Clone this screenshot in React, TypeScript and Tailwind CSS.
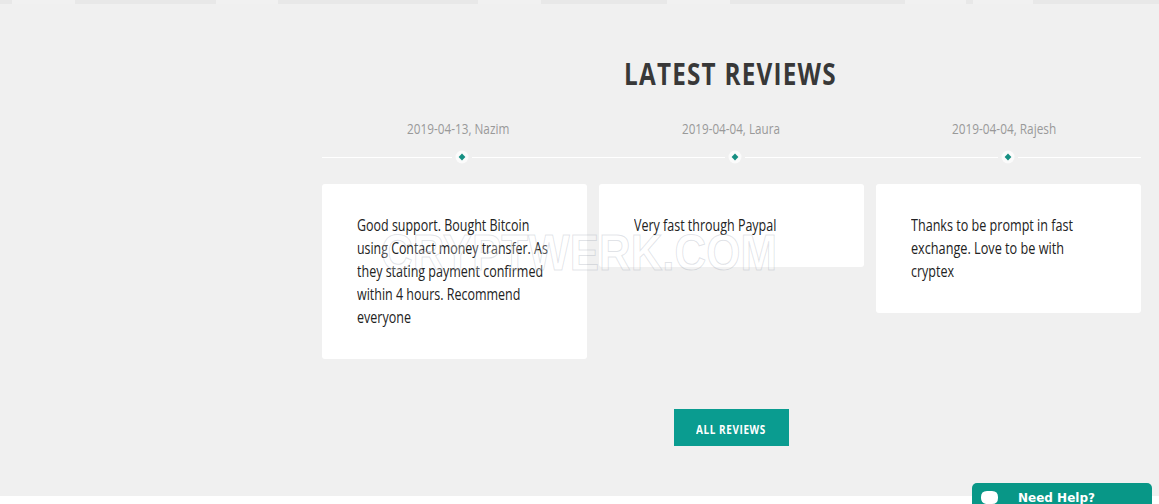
import { useLayoutEffect, useRef, useState } from "react";

const reviews = [
  {
    meta: "2019-04-13, Nazim",
    metaWidth: 102,
    lines: [
      { text: "Good support. Bought Bitcoin", width: 172 },
      { text: "using Contact money transfer. As", width: 191 },
      { text: "they stating payment confirmed", width: 186 },
      { text: "within 4 hours. Recommend", width: 163 },
      { text: "everyone", width: 54 }
    ]
  },
  {
    meta: "2019-04-04, Laura",
    metaWidth: 98,
    lines: [{ text: "Very fast through Paypal", width: 142 }]
  },
  {
    meta: "2019-04-04, Rajesh",
    metaWidth: 104,
    lines: [
      { text: "Thanks to be prompt in fast", width: 162 },
      { text: "exchange. Love to be with", width: 153 },
      { text: "cryptex", width: 43 }
    ]
  }
];

// Condenses a line of text horizontally to the given width
function NarrowText({ text, width }: { text: string; width: number }) {
  const ref = useRef<HTMLSpanElement>(null);
  const [scale, setScale] = useState(1);

  useLayoutEffect(() => {
    if (ref.current) {
      setScale(width / ref.current.offsetWidth);
    }
  }, [text, width]);

  return (
    <span className="block whitespace-nowrap" style={{ width }}>
      <span ref={ref} className="inline-block origin-left" style={{ transform: `scaleX(${scale})` }}>
        {text}
      </span>
    </span>
  );
}

function TopStrip() {
  return (
    <div className="flex h-1 bg-[#e8e8e8]">
      <div className="ml-3 w-[63px] bg-[#f1f1f1]" />
      <div className="ml-[141px] w-[62px] bg-[#f1f1f1]" />
      <div className="ml-[200px] w-[63px] bg-[#f1f1f1]" />
      <div className="ml-[126px] w-[63px] bg-[#f1f1f1]" />
      <div className="ml-[175px] w-[61px] bg-[#f1f1f1]" />
      <div className="ml-[7px] w-[60px] bg-[#f1f1f1]" />
    </div>
  );
}

function Timeline() {
  return (
    <div className="mt-[9px] grid h-5 grid-cols-3">
      {reviews.map((review) => (
        <div key={review.meta} className="flex items-center">
          <div className="h-px w-[130px] bg-white" />
          <svg className="h-5 w-5" viewBox="0 0 20 20">
            <circle cx="10" cy="10" r="6.5" fill="#fbfbfb" />
            <path d="M10 6.6 13.4 10 10 13.4 6.6 10Z" fill="#168f82" />
          </svg>
          <div className="h-px flex-1 bg-white" />
        </div>
      ))}
    </div>
  );
}

export default function App() {
  return (
    <div className="relative h-[504px] w-[1159px] overflow-hidden bg-white font-['Open_Sans',sans-serif]">
      <section className="h-[496px] bg-[#f0f0f0]">
        <TopStrip />
        <div className="ml-[322px] w-[819px]">
          <h2 className="flex justify-center pt-[50px] pr-[2px] text-[30px] leading-[40px] font-bold tracking-[1.5px] text-[#383838]">
            <NarrowText text="LATEST REVIEWS" width={213} />
          </h2>
          <div className="mt-6 grid grid-cols-3 text-[15px] leading-5 text-[#999]">
            {reviews.map((review) => (
              <div key={review.meta} className="flex justify-center pr-px">
                <NarrowText text={review.meta} width={review.metaWidth} />
              </div>
            ))}
          </div>
          <Timeline />
          <div className="mt-[17px] grid h-[175px] grid-cols-3 items-start gap-3">
            {reviews.map((review) => (
              <div
                key={review.meta}
                className="rounded-[3px] bg-white py-[30px] pl-[34.5px] text-[16px] leading-[23px] text-[#222]"
              >
                {review.lines.map((line) => (
                  <NarrowText key={line.text} text={line.text} width={line.width} />
                ))}
              </div>
            ))}
          </div>
          <div className="mt-[50px] flex justify-center">
            <button
              type="button"
              className="flex h-[37px] w-[115px] items-center justify-center bg-[#0a9c90] pt-1 pr-[2px] text-[11.5px] font-bold tracking-[0.7px] text-white"
            >
              <NarrowText text="ALL REVIEWS" width={70} />
            </button>
          </div>
        </div>
      </section>

      <svg className="pointer-events-none absolute top-[228px] left-[376px] h-12 w-[406px]" viewBox="0 0 406 48">
        <text
          x="5"
          y="42"
          textLength="396"
          lengthAdjust="spacingAndGlyphs"
          fontFamily="Liberation Sans, sans-serif"
          fontSize="50"
          fontWeight="700"
          fill="#ffffff"
          fillOpacity="0.25"
          stroke="#8890a0"
          strokeOpacity="0.26"
          strokeWidth="1"
        >
          CRYPTWERK.COM
        </text>
      </svg>

      <div className="absolute top-[483px] left-[972px] flex h-8 w-[180px] rounded-t-[5px] bg-[#089787] pl-[9px] font-['DejaVu_Sans',sans-serif] text-[12px] leading-[30px] font-bold text-white">
        <svg className="mt-2 mr-5 h-4 w-[17px]" viewBox="0 0 17 16">
          <path d="M6 0h5q6 0 6 6v1q0 6-6 6H9l-4 2v-2Q0 12 0 7V6Q0 0 6 0Z" fill="#fff" />
        </svg>
        <NarrowText text="Need Help?" width={77} />
      </div>
    </div>
  );
}
